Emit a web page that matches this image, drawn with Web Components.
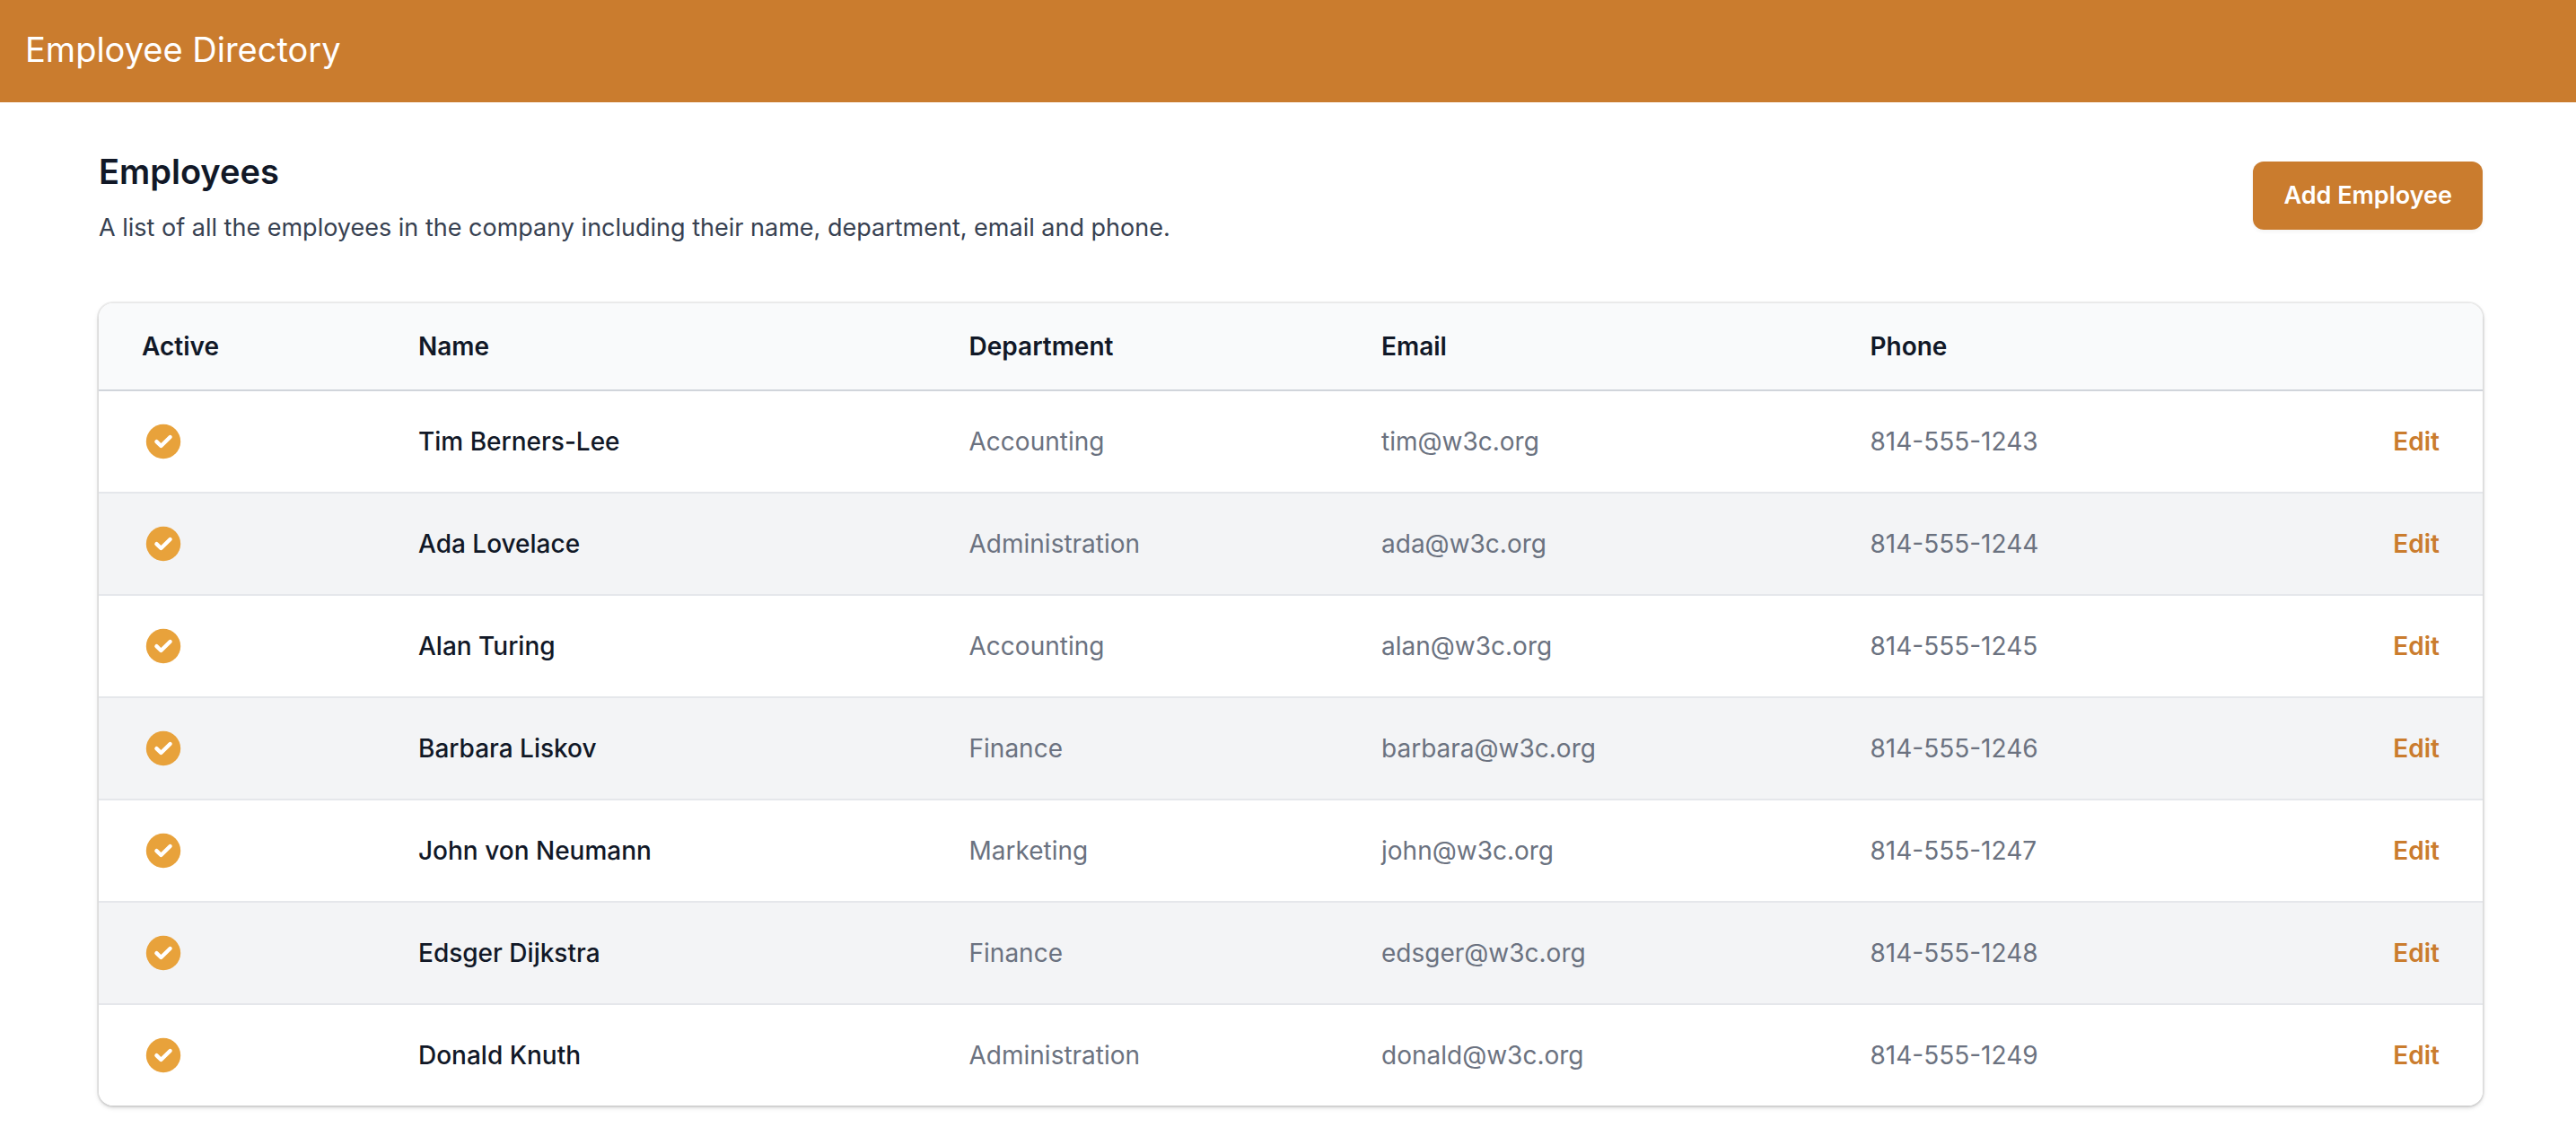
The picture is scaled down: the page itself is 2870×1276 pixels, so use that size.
<!DOCTYPE html>
<html lang="en">
<head>
<meta charset="utf-8">
<title>Employee Directory</title>
<style>
  body {
    margin: 0;
    background: #fff;
    color: #111827;
    font-family: Inter, "Liberation Sans", sans-serif;
    font-size: 28px;
    line-height: 40px;
    --title-size: 38px;
    --title-line: 58px;
    --copy-size: 27px;
    --accent: #ca7c2e;
    --accent-light: #e8a23b;
    --ink: #111827;
    --ink-soft: #374151;
    --ink-muted: #6b7280;
  }
</style>
</head>
<body>
<directory-app></directory-app>

<script>
  const define = (name, html, setup) => {
    const template = document.createElement('template');
    template.innerHTML = html;
    customElements.define(name, class extends HTMLElement {
      constructor() {
        super();
        this.attachShadow({ mode: 'open' }).append(template.content.cloneNode(true));
        if (setup) setup(this.shadowRoot);
      }
    });
  };

  const employees = [
    ['Tim Berners-Lee', 'Accounting', 'tim@w3c.org', '814-555-1243'],
    ['Ada Lovelace', 'Administration', 'ada@w3c.org', '814-555-1244'],
    ['Alan Turing', 'Accounting', 'alan@w3c.org', '814-555-1245'],
    ['Barbara Liskov', 'Finance', 'barbara@w3c.org', '814-555-1246'],
    ['John von Neumann', 'Marketing', 'john@w3c.org', '814-555-1247'],
    ['Edsger Dijkstra', 'Finance', 'edsger@w3c.org', '814-555-1248'],
    ['Donald Knuth', 'Administration', 'donald@w3c.org', '814-555-1249']
  ];

  define('app-header', `
    <style>
      :host { display: block; }
      header {
        padding: 26px 28px 30px;
        background: var(--accent);
        color: #fff;
        font-size: var(--title-size);
        line-height: var(--title-line);
      }
    </style>
    <header><slot></slot></header>`);

  define('action-button', `
    <style>
      :host { display: block; flex: none; }
      button {
        padding: 18px 34px;
        border: 0;
        border-radius: 12px;
        background: var(--accent);
        box-shadow: 0 2px 4px rgb(0 0 0 / 0.05);
        color: #fff;
        font: inherit;
        font-size: var(--copy-size);
        font-weight: 600;
        cursor: pointer;
      }
    </style>
    <button type="button"><slot></slot></button>`);

  define('section-heading', `
    <style>
      :host { display: flex; align-items: center; justify-content: space-between; gap: 48px; }
      h1 { margin: 0; font-size: var(--title-size); line-height: var(--title-line); font-weight: 600; color: var(--ink); }
      p { margin: 14px 0 0; font-size: var(--copy-size); color: var(--ink-soft); }
    </style>
    <div>
      <h1><slot name="title"></slot></h1>
      <p><slot name="description"></slot></p>
    </div>
    <slot name="action"></slot>`);

  define('active-badge', `
    <style>
      :host { display: block; width: 48px; height: 48px; }
      svg { display: block; width: 100%; height: 100%; }
    </style>
    <svg viewBox="0 0 24 24" role="img" aria-label="Active">
      <circle cx="12" cy="12" r="9.6" fill="var(--accent-light)"/>
      <path d="M8.2 12.1 10.7 14.5 15.8 9.5" fill="none" stroke="#fff" stroke-width="2.2" stroke-linecap="round" stroke-linejoin="round"/>
    </svg>`);

  define('employee-table', `
    <style>
      :host {
        display: block;
        overflow: hidden;
        border-radius: 16px;
        box-shadow: 0 0 0 2px rgb(0 0 0 / 0.06), 0 2px 6px rgb(0 0 0 / 0.1), 0 2px 4px rgb(0 0 0 / 0.1);
      }
      table { width: 100%; border-collapse: separate; border-spacing: 0; table-layout: fixed; }
      th, td { padding: 0 24px; text-align: left; white-space: nowrap; }
      th { height: 96px; background: #f9fafb; border-bottom: 2px solid #d1d5db; font-weight: 600; color: var(--ink); }
      td { height: 112px; border-bottom: 2px solid #e5e7eb; color: var(--ink-muted); }
      tbody tr { background: #fff; }
      tbody tr:nth-child(even) { background: #f3f4f6; }
      tbody tr:last-child td { border-bottom: 0; }
      th:first-child, td:first-child { padding-left: 48px; }
      th:last-child, td:last-child { padding-right: 48px; text-align: right; }
      .name { font-weight: 500; color: var(--ink); }
      a { color: var(--accent); font-weight: 600; text-decoration: none; }
      .active { width: 12.5%; }
      .person { width: 23.1%; }
      .department { width: 17.3%; }
      .email { width: 20.5%; }
    </style>
    <table>
      <colgroup>
        <col class="active"><col class="person"><col class="department"><col class="email"><col><col>
      </colgroup>
      <thead>
        <tr>
          <th scope="col">Active</th>
          <th scope="col">Name</th>
          <th scope="col">Department</th>
          <th scope="col">Email</th>
          <th scope="col">Phone</th>
          <th scope="col" aria-label="Edit"></th>
        </tr>
      </thead>
      <tbody></tbody>
    </table>`, root => {
      root.querySelector('tbody').innerHTML = employees.map(([name, department, email, phone]) => `
        <tr>
          <td><active-badge></active-badge></td>
          <td class="name">${name}</td>
          <td>${department}</td>
          <td>${email}</td>
          <td>${phone}</td>
          <td><a href="#edit">Edit</a></td>
        </tr>`).join('');
    });

  define('directory-app', `
    <style>
      :host { display: block; }
      main { display: flex; flex-direction: column; gap: 64px; padding: 48px 104px 44px 110px; }
    </style>
    <app-header>Employee Directory</app-header>
    <main>
      <section-heading>
        <span slot="title">Employees</span>
        <span slot="description">A list of all the employees in the company including their name, department, email and phone.</span>
        <action-button slot="action">Add Employee</action-button>
      </section-heading>
      <employee-table></employee-table>
    </main>`);
</script>
</body>
</html>
